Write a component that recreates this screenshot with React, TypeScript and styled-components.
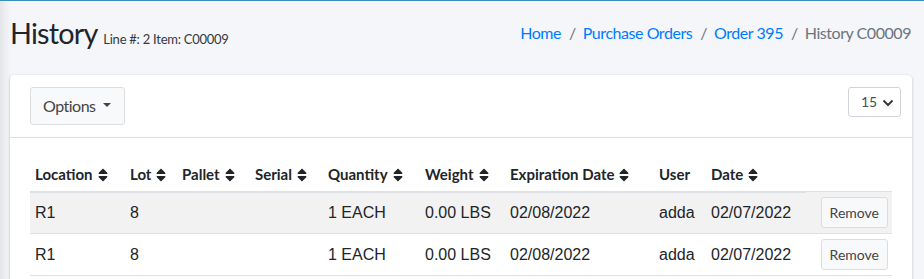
import React from "react";
import styled, { createGlobalStyle } from "styled-components";

const GlobalStyle = createGlobalStyle`
  html, body { margin: 0; padding: 0; }
  body {
    font-family: Lato, "Noto Sans", sans-serif;
    color: #212529;
    background: linear-gradient(to right, #e2e4e8 0px, #eef0f3 6px, #f4f6f9 12px);
    min-height: 279px;
  }
  * { box-sizing: border-box; }
`;

const Page = styled.div`
  border-top: 1px solid #3c8dbc;
  min-height: 279px;
`;

const ContentHeader = styled.div`
  display: flex;
  align-items: center;
  justify-content: space-between;
  padding: 15px 13px 24px 10px;
`;

const Title = styled.h1`
  margin: 0;
  font-size: 28.8px;
  font-weight: 400;
  line-height: 1.2;
  letter-spacing: -0.8px;
  color: #212529;
`;

const TitleSmall = styled.small`
  font-size: 13px;
  letter-spacing: -0.25px;
  color: #343a40;
`;

const Crumbs = styled.ol`
  display: flex;
  list-style: none;
  margin: 0;
  padding: 0;
  font-size: 16px;
  line-height: 24px;
  letter-spacing: -0.45px;
  & > li + li::before {
    content: "/";
    color: #6c757d;
    padding: 0 7px 0 8px;
  }
`;

const Crumb = styled.li<{ $active?: boolean }>`
  color: ${(p) => (p.$active ? "#6c757d" : "#007bff")};
`;

const Card = styled.div`
  margin: 0 12px 0 10px;
  background: #fff;
  border-radius: 4px;
  box-shadow: 0 0 1px rgba(0, 0, 0, 0.125), 0 1px 3px rgba(0, 0, 0, 0.2);
`;

const CardHeader = styled.div`
  display: flex;
  align-items: flex-start;
  justify-content: space-between;
  padding: 12px 11px 12px 20px;
  border-bottom: 1px solid rgba(0, 0, 0, 0.125);
`;

const OptionsButton = styled.button`
  display: inline-flex;
  align-items: center;
  height: 38px;
  padding: 6px 13px 6px 12px;
  font-family: Lato, "Noto Sans", sans-serif;
  font-size: 16px;
  line-height: 24px;
  letter-spacing: -0.5px;
  color: #444;
  background: #f8f9fa;
  border: 1px solid #ddd;
  border-radius: 3px;
  &::after {
    content: "";
    display: inline-block;
    margin-left: 7px;
    border-top: 4px solid #444;
    border-right: 4px solid transparent;
    border-left: 4px solid transparent;
    margin-top: -2px;
  }
`;

const SelectWrap = styled.div`
  position: relative;
  width: 53px;
  height: 30px;
`;

const Select = styled.select`
  appearance: none;
  width: 53px;
  height: 30px;
  padding: 0 0 0 12px;
  font-family: Lato, "Noto Sans", sans-serif;
  font-size: 14px;
  color: #495057;
  background: #fff;
  border: 1px solid #ced4da;
  border-radius: 3px;
`;

const Chevron = styled.svg`
  position: absolute;
  right: 7px;
  top: 12px;
  pointer-events: none;
`;

const CardBody = styled.div`
  padding: 20px;
`;

const Table = styled.table`
  width: 100%;
  border-collapse: collapse;
  table-layout: fixed;
`;

const Th = styled.th`
  text-align: left;
  padding: 7px 5px 8px;
  font-size: 15px;
  font-weight: 700;
  line-height: 18px;
  color: #212529;
  white-space: nowrap;
  border-bottom: 2px solid #dee2e6;
  vertical-align: bottom;
`;

const Tr = styled.tr<{ $striped?: boolean }>`
  background: ${(p) => (p.$striped ? "#f2f2f2" : "#fff")};
  &:last-child td { border-bottom: 1px solid #dee2e6; }
`;

const Td = styled.td<{ $right?: boolean }>`
  height: 42px;
  padding: 5px;
  font-family: "Liberation Sans", Arial, sans-serif;
  font-size: 16px;
  line-height: 20px;
  color: #212529;
  border-top: 1px solid #dee2e6;
  vertical-align: middle;
  white-space: nowrap;
  text-align: ${(p) => (p.$right ? "right" : "left")};
`;

const RemoveButton = styled.button`
  height: 31px;
  padding: 4px 8px;
  font-family: Lato, "Noto Sans", sans-serif;
  font-size: 14px;
  line-height: 21px;
  color: #444;
  background: #f8f9fa;
  border: 1px solid #ddd;
  border-radius: 3px;
  margin-right: -1px;
`;

const SortIcon = () => (
  <svg width="10" height="14" viewBox="0 64 320 384" style={{ marginLeft: 5, verticalAlign: "-2px" }}>
    <path
      fill="#212529"
      d="M41 288h238c21.4 0 32.1 25.9 17 41L177 448c-9.4 9.4-24.6 9.4-33.9 0L24 329c-15.1-15.1-4.4-41 17-41zm255-105L177 64c-9.4-9.4-24.6-9.4-33.9 0L24 183c-15.1 15.1-4.4 41 17 41h238c21.4 0 32.1-25.9 17-41z"
    />
  </svg>
);

const columns: { label: string; sort: boolean; width: number }[] = [
  { label: "Location", sort: true, width: 95 },
  { label: "Lot", sort: true, width: 52 },
  { label: "Pallet", sort: true, width: 73 },
  { label: "Serial", sort: true, width: 73 },
  { label: "Quantity", sort: true, width: 97 },
  { label: "Weight", sort: true, width: 85 },
  { label: "Expiration Date", sort: true, width: 149 },
  { label: "User", sort: false, width: 52 },
  { label: "Date", sort: true, width: 100 },
];

const rows = [
  ["R1", "8", "", "", "1 EACH", "0.00 LBS", "02/08/2022", "adda", "02/07/2022"],
  ["R1", "8", "", "", "1 EACH", "0.00 LBS", "02/08/2022", "adda", "02/07/2022"],
];

export default function App() {
  return (
    <>
      <GlobalStyle />
      <Page>
        <ContentHeader>
          <Title>
            History <TitleSmall>Line #: 2 Item: C00009</TitleSmall>
          </Title>
          <Crumbs>
            <Crumb>Home</Crumb>
            <Crumb>Purchase Orders</Crumb>
            <Crumb>Order 395</Crumb>
            <Crumb $active>History C00009</Crumb>
          </Crumbs>
        </ContentHeader>
        <Card>
          <CardHeader>
            <OptionsButton>Options</OptionsButton>
            <SelectWrap>
              <Select defaultValue="15">
                <option value="15">15</option>
                <option value="25">25</option>
                <option value="50">50</option>
              </Select>
              <Chevron width="12" height="8" viewBox="0 0 12 8">
                <path d="M1.5 1.5 L6 6 L10.5 1.5" fill="none" stroke="#343a40" strokeWidth="2" />
              </Chevron>
            </SelectWrap>
          </CardHeader>
          <CardBody>
            <Table>
              <colgroup>
                {columns.map((c) => (
                  <col key={c.label} style={{ width: c.width }} />
                ))}
                <col />
              </colgroup>
              <thead>
                <tr>
                  {columns.map((c) => (
                    <Th key={c.label}>
                      {c.label}
                      {c.sort && <SortIcon />}
                    </Th>
                  ))}
                </tr>
              </thead>
              <tbody>
                {rows.map((r, i) => (
                  <Tr key={i} $striped={i % 2 === 0}>
                    {r.map((v, j) => (
                      <Td key={j}>{v}</Td>
                    ))}
                    <Td $right>
                      <RemoveButton>Remove</RemoveButton>
                    </Td>
                  </Tr>
                ))}
              </tbody>
            </Table>
          </CardBody>
        </Card>
      </Page>
    </>
  );
}
